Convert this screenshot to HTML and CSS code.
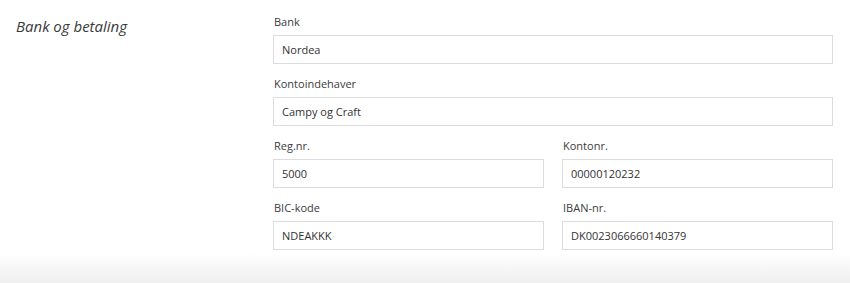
FILE: index.html
```html
<!DOCTYPE html>
<html lang="da">
<head>
<meta charset="utf-8">
<link rel="stylesheet" href="styles.css">
</head>
<body>
<div class="page">
  <section class="section">
    <h2 class="section-title">Bank og betaling</h2>
    <div class="form">
      <div class="field">
        <label class="label">Bank</label>
        <div class="input">Nordea</div>
      </div>
      <div class="field">
        <label class="label">Kontoindehaver</label>
        <div class="input">Campy og Craft</div>
      </div>
      <div class="row">
        <div class="field">
          <label class="label">Reg.nr.</label>
          <div class="input">5000</div>
        </div>
        <div class="field">
          <label class="label">Kontonr.</label>
          <div class="input">00000120232</div>
        </div>
      </div>
      <div class="row">
        <div class="field">
          <label class="label">BIC-kode</label>
          <div class="input">NDEAKKK</div>
        </div>
        <div class="field">
          <label class="label">IBAN-nr.</label>
          <div class="input">DK0023066660140379</div>
        </div>
      </div>
    </div>
  </section>
  <div class="footer-shade"></div>
</div>
</body>
</html>
```

FILE: styles.css
```css
* { box-sizing: border-box; }
html, body { margin: 0; padding: 0; background: #fff; }
body {
  font-family: "Open Sans", "Noto Sans", sans-serif;
  color: #3c3c3c;
  width: 850px;
  height: 283px;
  overflow: hidden;
}
.page { display: flex; flex-direction: column; height: 283px; }
.section {
  display: flex;
  padding: 14px 17px 0 16px;
}
.section-title {
  width: 257px;
  flex: none;
  margin: 2px 0 0 0;
  font-size: 15px;
  font-style: italic;
  font-weight: 400;
  line-height: 20px;
  color: #3a3a3a;
}
.form {
  flex: 1;
  display: flex;
  flex-direction: column;
  gap: 12px;
}
.row {
  display: grid;
  grid-template-columns: 271px 271px;
  column-gap: 18px;
}
.field { display: flex; flex-direction: column; }
.label {
  display: block;
  font-size: 11px;
  line-height: 16px;
  margin: 0 0 5px 1px;
  color: #3c3c3c;
}
.input {
  height: 29px;
  border: 1px solid #dcdce0;
  background: #fff;
  padding: 0 8px;
  font-size: 11px;
  line-height: 27px;
  color: #333;
}
.footer-shade {
  margin-top: auto;
  height: 30px;
  background: linear-gradient(#ffffff, #efefef);
}
```
